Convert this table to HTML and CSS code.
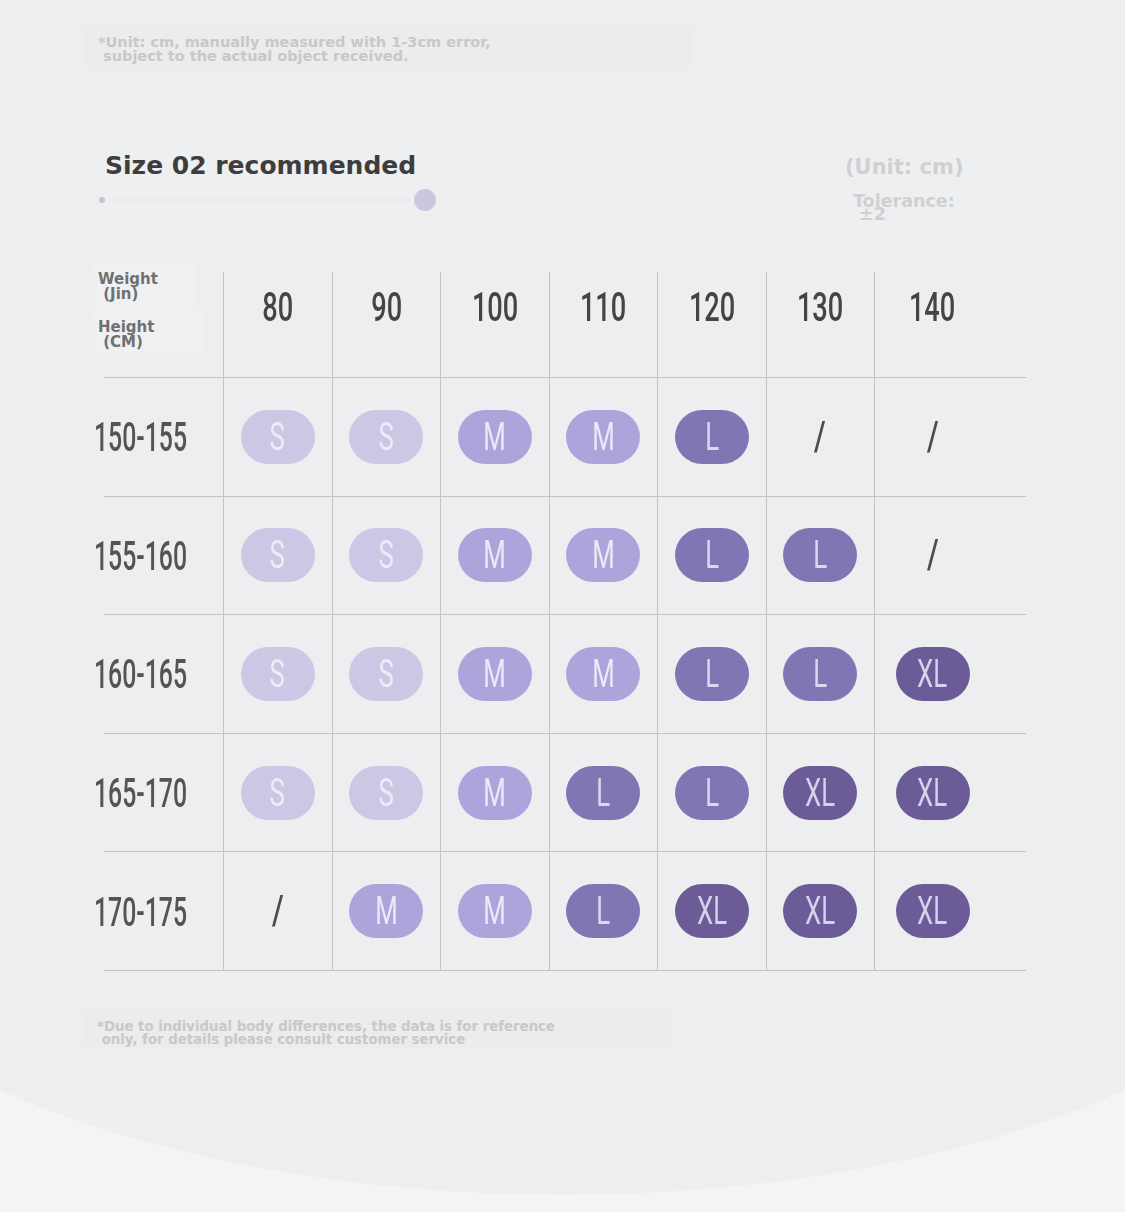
FILE: index.html
```html
<!DOCTYPE html>
<html>
<head>
<meta charset="utf-8">
<link rel="stylesheet" href="styles.css">
</head>
<body>
<div class="page">
  <div class="note top-note">*Unit: cm, manually measured with 1-3cm error,<br>&nbsp;subject to the actual object received.</div>

  <div class="title-row">
    <div class="title-box">
      <h1 class="title">Size 02 recommended</h1>
      <div class="title-deco">
        <span class="dot-small"></span>
        <span class="deco-line"></span>
        <span class="dot-big"></span>
      </div>
    </div>
    <div class="unit-box">
      <div class="unit">(Unit: cm)</div>
      <div class="tolerance">Tolerance:<br>&nbsp;±2</div>
    </div>
  </div>

  <div class="table">
    <div class="row head">
      <div class="cell corner">
        <div class="corner-label weight">Weight<br>&nbsp;(Jin)</div>
        <div class="corner-label height">Height<br>&nbsp;(CM)</div>
      </div>
      <div class="cell col"><span class="num">80</span></div>
      <div class="cell col"><span class="num">90</span></div>
      <div class="cell col"><span class="num">100</span></div>
      <div class="cell col"><span class="num">110</span></div>
      <div class="cell col"><span class="num">120</span></div>
      <div class="cell col"><span class="num">130</span></div>
      <div class="cell col last"><span class="num">140</span></div>
      <div class="cell spacer"></div>
    </div>

    <div class="row">
      <div class="cell rlabel"><span class="num">150-155</span></div>
      <div class="cell col"><span class="pill s"><span class="ltr">S</span></span></div>
      <div class="cell col"><span class="pill s"><span class="ltr">S</span></span></div>
      <div class="cell col"><span class="pill m"><span class="ltr">M</span></span></div>
      <div class="cell col"><span class="pill m"><span class="ltr">M</span></span></div>
      <div class="cell col"><span class="pill l"><span class="ltr">L</span></span></div>
      <div class="cell col"><span class="slash">/</span></div>
      <div class="cell col last"><span class="slash">/</span></div>
      <div class="cell spacer"></div>
    </div>

    <div class="row">
      <div class="cell rlabel"><span class="num">155-160</span></div>
      <div class="cell col"><span class="pill s"><span class="ltr">S</span></span></div>
      <div class="cell col"><span class="pill s"><span class="ltr">S</span></span></div>
      <div class="cell col"><span class="pill m"><span class="ltr">M</span></span></div>
      <div class="cell col"><span class="pill m"><span class="ltr">M</span></span></div>
      <div class="cell col"><span class="pill l"><span class="ltr">L</span></span></div>
      <div class="cell col"><span class="pill l"><span class="ltr">L</span></span></div>
      <div class="cell col last"><span class="slash">/</span></div>
      <div class="cell spacer"></div>
    </div>

    <div class="row">
      <div class="cell rlabel"><span class="num">160-165</span></div>
      <div class="cell col"><span class="pill s"><span class="ltr">S</span></span></div>
      <div class="cell col"><span class="pill s"><span class="ltr">S</span></span></div>
      <div class="cell col"><span class="pill m"><span class="ltr">M</span></span></div>
      <div class="cell col"><span class="pill m"><span class="ltr">M</span></span></div>
      <div class="cell col"><span class="pill l"><span class="ltr">L</span></span></div>
      <div class="cell col"><span class="pill l"><span class="ltr">L</span></span></div>
      <div class="cell col last"><span class="pill xl"><span class="ltr">XL</span></span></div>
      <div class="cell spacer"></div>
    </div>

    <div class="row">
      <div class="cell rlabel"><span class="num">165-170</span></div>
      <div class="cell col"><span class="pill s"><span class="ltr">S</span></span></div>
      <div class="cell col"><span class="pill s"><span class="ltr">S</span></span></div>
      <div class="cell col"><span class="pill m"><span class="ltr">M</span></span></div>
      <div class="cell col"><span class="pill l"><span class="ltr">L</span></span></div>
      <div class="cell col"><span class="pill l"><span class="ltr">L</span></span></div>
      <div class="cell col"><span class="pill xl"><span class="ltr">XL</span></span></div>
      <div class="cell col last"><span class="pill xl"><span class="ltr">XL</span></span></div>
      <div class="cell spacer"></div>
    </div>

    <div class="row">
      <div class="cell rlabel"><span class="num">170-175</span></div>
      <div class="cell col"><span class="slash">/</span></div>
      <div class="cell col"><span class="pill m"><span class="ltr">M</span></span></div>
      <div class="cell col"><span class="pill m"><span class="ltr">M</span></span></div>
      <div class="cell col"><span class="pill l"><span class="ltr">L</span></span></div>
      <div class="cell col"><span class="pill xl"><span class="ltr">XL</span></span></div>
      <div class="cell col"><span class="pill xl"><span class="ltr">XL</span></span></div>
      <div class="cell col last"><span class="pill xl"><span class="ltr">XL</span></span></div>
      <div class="cell spacer"></div>
    </div>
  </div>

  <div class="note bottom-note">*Due to individual body differences, the data is for reference<br>&nbsp;only, for details please consult customer service</div>

  <svg class="wave" viewBox="0 0 1125 130" preserveAspectRatio="none">
    <path d="M0 0 C 200 90, 440 105, 562 105 C 685 105, 925 90, 1125 0 L 1125 130 L 0 130 Z" fill="#f4f4f4"/>
  </svg>
</div>
</body>
</html>
```

FILE: styles.css
```css
* { box-sizing: border-box; }
html, body { margin: 0; padding: 0; }
body {
  background: #edeef0;
  font-family: "Liberation Sans", Arial, sans-serif;
}
.page {
  position: relative;
  width: 1125px;
  height: 1212px;
  overflow: hidden;
  padding-top: 27px;
}
.note {
  font-family: "DejaVu Sans", "Liberation Sans", sans-serif;
  font-weight: bold;
  color: #c8c8ca;
  background: #ebeceb;
  box-shadow: 0 0 3px 1px #ebeceb;
  white-space: nowrap;
}
.top-note {
  margin-left: 86px;
  width: 604px;
  height: 40px;
  padding: 8px 0 0 12px;
  font-size: 14.5px;
  line-height: 14px;
}
.title-row {
  display: flex;
  align-items: flex-start;
  height: 81px;
  margin-top: 67px;
}
.title-box {
  margin-left: 97px;
  width: 335px;
  height: 81px;
  background: #eeeff0;
  box-shadow: 0 0 3px 2px #eeeff0;
  padding: 17px 0 0 8px;
}
.title {
  margin: 0;
  font-family: "DejaVu Sans", "Liberation Sans", sans-serif;
  font-size: 25px;
  line-height: 30px;
  font-weight: bold;
  color: #3d3d3d;
  white-space: nowrap;
}
.title-deco {
  display: flex;
  align-items: center;
  margin: 7px 0 0 -8px;
  height: 24px;
}
.dot-small {
  width: 6px; height: 6px;
  border-radius: 50%;
  background: #c7c3df;
  margin-left: 2px;
  filter: blur(0.6px);
}
.deco-line {
  flex: 1;
  height: 2px;
  margin: 0 4px;
  background: #e9eaec;
}
.dot-big {
  width: 22px; height: 22px;
  border-radius: 50%;
  background: #cac8e0;
  margin-right: -4px;
  filter: blur(0.5px);
}
.unit-box {
  margin-left: auto;
  margin-right: 155px;
  margin-top: 9px;
  width: 130px;
  display: flex;
  flex-direction: column;
  align-items: flex-start;
  font-family: "DejaVu Sans", "Liberation Sans", sans-serif;
  font-weight: bold;
  color: #d0d0d2;
  white-space: nowrap;
}
.unit {
  background: #eeeff0;
  padding: 9px 0 3px 5px;
  font-size: 21px;
  line-height: 30px;
  width: 130px;
}
.tolerance {
  margin-left: 8px;
  margin-top: 4px;
  background: #eeeff0;
  padding: 6px 4px 3px 5px;
  font-size: 17.5px;
  line-height: 13px;
}

/* table */
.table {
  margin-top: 57px;
  margin-left: 104px;
  width: 922px;
}
.row {
  display: grid;
  grid-template-columns: 119px repeat(6, 108.5px) 116px 1fr;
  height: 118.6px;
  border-bottom: 1px solid #c3c3c5;
}
.row.head { height: 106px; }
.cell {
  display: flex;
  align-items: center;
  justify-content: center;
  min-width: 0;
}
.col { border-left: 1px solid #c3c3c5; }
.spacer { border-left: none; }
.num {
  display: inline-block;
  flex-shrink: 0;
  white-space: nowrap;
  font-family: "Roboto", "Liberation Sans", sans-serif;
  font-weight: 500;
  font-size: 40px;
  line-height: 40px;
  color: #4a4a4a;
  transform: scaleX(0.68);
}
.head .col { align-items: flex-start; padding-top: 16px; }
.head .num { color: #444; }
.rlabel {
  justify-content: flex-start;
  margin-left: -10px;
  padding-top: 3px;
}
.rlabel .num {
  color: #545454;
  transform-origin: left center;
  transform: scaleX(0.62);
}
.corner {
  flex-direction: column;
  align-items: flex-start;
  justify-content: flex-start;
  margin-left: -12px;
  margin-top: -8px;
}
.corner-label {
  font-family: "DejaVu Sans", "Liberation Sans", sans-serif;
  font-size: 15px;
  line-height: 15px;
  font-weight: bold;
  color: #707072;
  padding: 8px 4px 6px 6px;
  background: #eff0f1;
  box-shadow: 0 0 3px 1px #eff0f1;
  white-space: nowrap;
}
.corner-label.weight { width: 103px; height: 45px; }
.corner-label.height { width: 111px; height: 44px; margin-top: 3px; padding-top: 8px; }
.pill {
  width: 74px;
  height: 54px;
  border-radius: 27px;
  display: flex;
  align-items: center;
  justify-content: center;
}
.ltr {
  display: inline-block;
  font-family: "Roboto", "Liberation Sans", sans-serif;
  font-size: 38px;
  line-height: 38px;
  transform: scaleX(0.68);
}
.pill.s { background: #cdc7e5; color: #eeebf7; }
.pill.m { background: #afa3dc; color: #ece8f8; }
.pill.l { background: #8275b3; color: #ddd8ef; }
.pill.xl { background: #6b5b97; color: #d8d0ec; }
.slash {
  font-family: "Roboto", "Liberation Sans", sans-serif;
  font-weight: 500;
  font-size: 40px;
  line-height: 40px;
  color: #4c4c4c;
  transform: scaleX(0.75);
  display: inline-block;
}

.bottom-note {
  margin-top: 40px;
  margin-left: 86px;
  width: 584px;
  height: 36px;
  padding: 9px 0 0 11px;
  font-size: 13.3px;
  line-height: 13px;
}
.wave {
  position: absolute;
  left: 0;
  top: 1090px;
  width: 1125px;
  height: 130px;
}
```
